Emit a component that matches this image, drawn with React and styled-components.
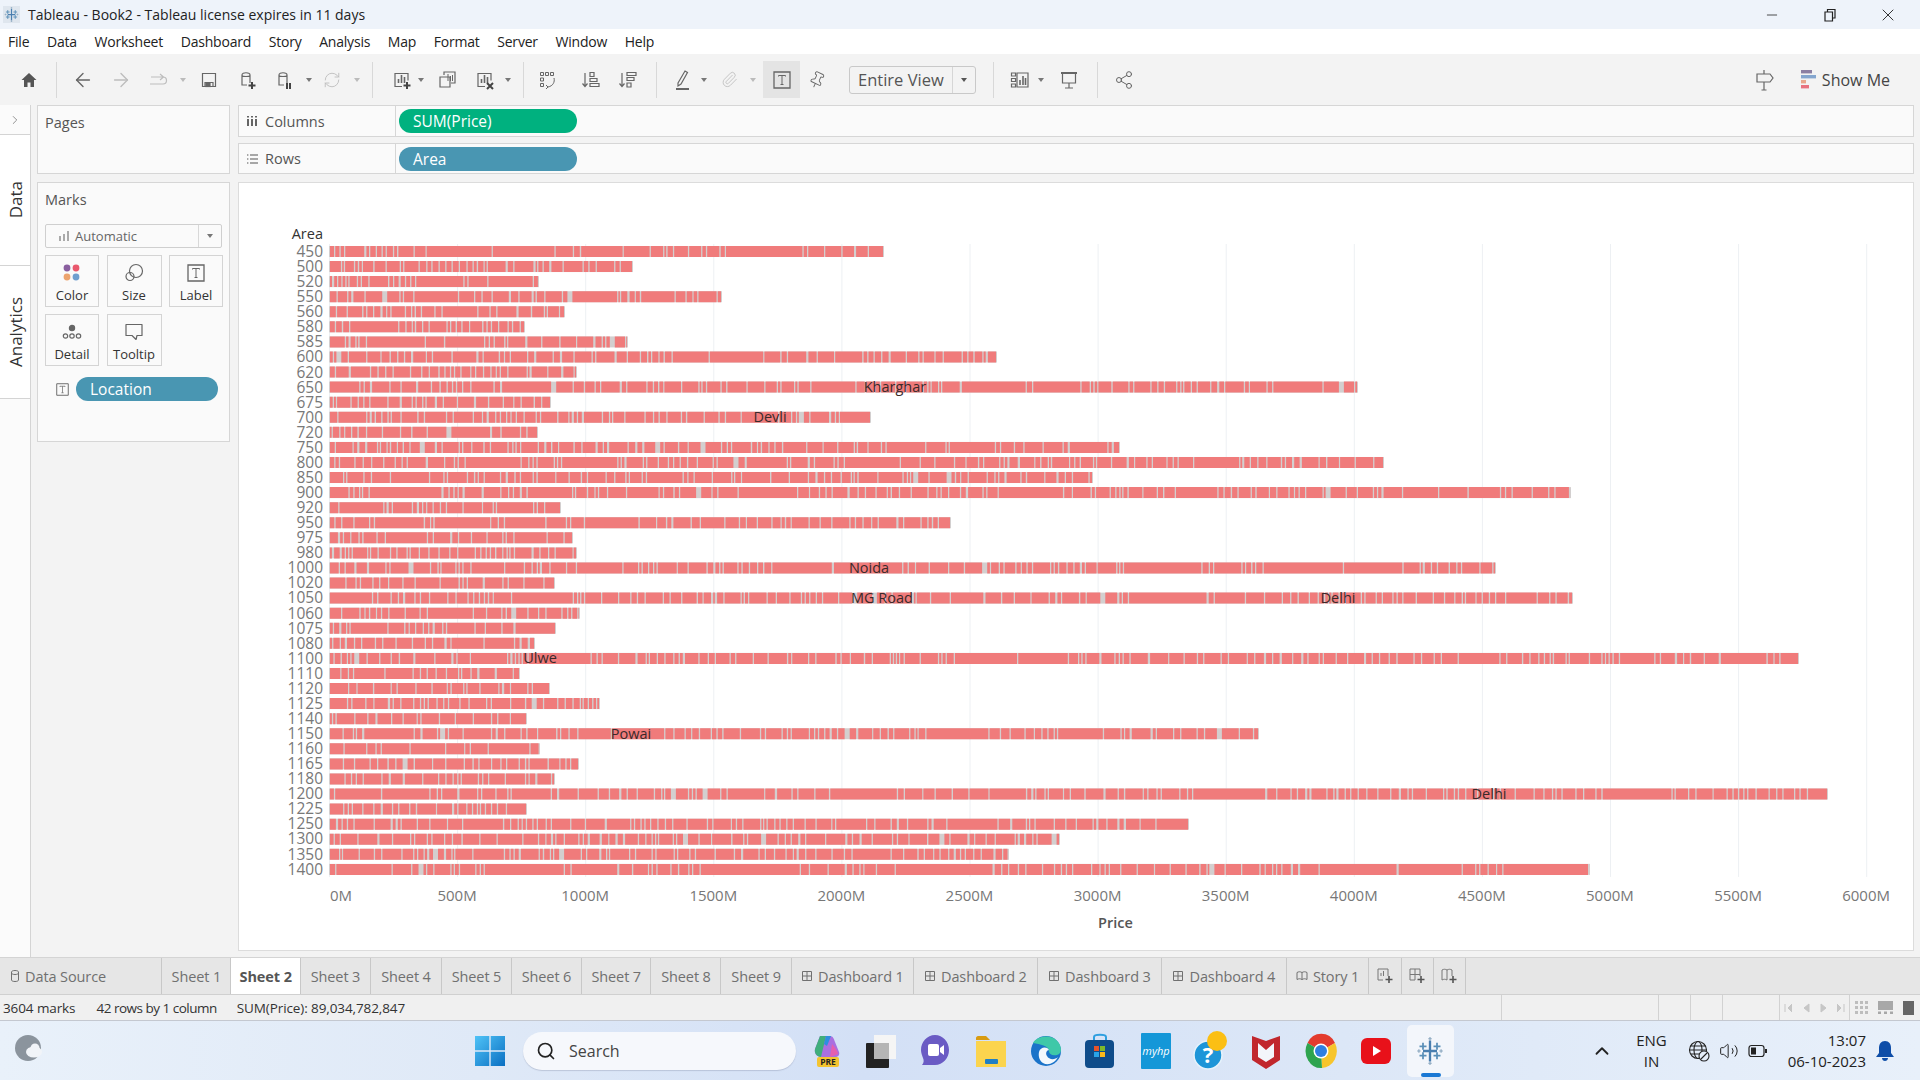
import React from 'react';
import styled, {createGlobalStyle} from 'styled-components';
import {ArrowLeft, ArrowRight, RefreshCw, Paperclip, Pin, Share2, Search, ChevronUp, ChevronRight, X, Minus, Volume2} from 'lucide-react';

const GlobalStyle = createGlobalStyle`
    html, body {
        margin: 0;
        padding: 0;
        background: #f3f3f3;
        font-family: "Open Sans", "Liberation Sans", sans-serif;
    }
`;

const Page = styled.div`
    width: 1920px;
    height: 1080px;
    overflow: hidden;
    display: flex;
    flex-direction: column;
    color: #333;
`;

const TitleBar = styled.div`
    height: 29px;
    flex: none;
    background: #eef3fa;
    display: flex;
    align-items: center;
    padding-left: 3px;
    font-size: 14px;
    color: #222;
`;
const TitleIcon = styled.div`
    width: 17px;
    height: 17px;
    background: #dfe6ee;
    display: flex;
    align-items: center;
    justify-content: center;
`;
const TitleText = styled.span`
    margin-left: 8px;
`;
const WindowButtons = styled.div`
    margin-left: auto;
    display: flex;
    align-items: center;
    color: #222;
`;
const WindowButton = styled.div`
    width: 58px;
    display: flex;
    justify-content: center;
    &:last-child { margin-right: 3px; }
`;

const MenuBar = styled.div`
    height: 25px;
    flex: none;
    background: #fff;
    display: flex;
    align-items: center;
    padding-left: 8px;
`;
const MenuItem = styled.span`
    font-size: 14px;
    color: #222;
    margin-right: 17.6px;
    letter-spacing: -0.2px;
`;

const Toolbar = styled.div`
    height: 51px;
    flex: none;
    background: #f3f3f3;
    display: flex;
    align-items: center;
`;
const ToolSlot = styled.div`
    flex: none;
    width: ${p => p.$w}px;
    margin-left: ${p => p.$ml}px;
    height: 37px;
    display: flex;
    align-items: center;
    justify-content: center;
    color: ${p => (p.$off ? '#bdbdbd' : '#666')};
    background: ${p => (p.$active ? '#e4e4e4' : 'transparent')};
`;
const ToolSep = styled.div`
    flex: none;
    width: 1px;
    height: 36px;
    margin-left: ${p => p.$ml}px;
    background: #d8d8d8;
`;
const Caret = styled.div`
    width: 0;
    height: 0;
    border-left: 3px solid transparent;
    border-right: 3px solid transparent;
    border-top: 4px solid ${p => p.$color || '#777'};
`;
const ViewCombo = styled.div`
    flex: none;
    margin-left: ${p => p.$ml}px;
    width: 127px;
    height: 28px;
    box-sizing: border-box;
    border: 1px solid #c9c9c9;
    border-radius: 3px;
    display: flex;
    align-items: center;
    font-size: 16.5px;
    color: #555;
`;
const ComboText = styled.span`
    width: 103px;
    padding-left: 8px;
    box-sizing: border-box;
    border-right: 1px solid #d6d6d6;
    line-height: 26px;
    white-space: nowrap;
`;
const ComboArrow = styled.span`
    flex: 1;
    display: flex;
    justify-content: center;
`;
const ToolRight = styled.div`
    margin-left: auto;
    display: flex;
    align-items: center;
    padding-right: 30px;
    color: #666;
`;
const ShowMe = styled.div`
    display: flex;
    align-items: center;
    gap: 6px;
    margin-left: 26px;
    font-size: 16px;
    color: #444;
`;

const Workspace = styled.div`
    flex: none;
    height: 852px;
    display: flex;
    background: #f3f3f3;
`;
const SideRail = styled.div`
    width: 30px;
    flex: none;
    background: #fbfbfb;
    border-right: 1px solid #d4d4d4;
    display: flex;
    flex-direction: column;
`;
const RailToggle = styled.div`
    height: 29px;
    border-bottom: 1px solid #d4d4d4;
    display: flex;
    align-items: center;
    justify-content: center;
    color: #666;
`;
const RailTab = styled.div`
    height: ${p => p.$h}px;
    border-bottom: 1px solid #d4d4d4;
    background: #fff;
    display: flex;
    align-items: center;
    justify-content: center;
`;
const RailText = styled.span`
    writing-mode: vertical-rl;
    transform: rotate(180deg);
    font-size: 17px;
    color: #333;
`;

const CardColumn = styled.div`
    width: 193px;
    flex: none;
    margin: 0 8px 0 6px;
    display: flex;
    flex-direction: column;
    gap: 8px;
`;
const Card = styled.div`
    box-sizing: border-box;
    height: ${p => p.$h}px;
    background: #fafafa;
    border: 1px solid #d6d6d6;
    padding: 7px 7px;
`;
const CardTitle = styled.div`
    font-size: 14.5px;
    line-height: 20px;
    color: #555;
`;
const MarkType = styled.div`
    margin-top: 14px;
    height: 24px;
    box-sizing: border-box;
    border: 1px solid #cfcfcf;
    border-radius: 2px;
    display: flex;
    align-items: center;
    font-size: 13px;
    color: #666;
`;
const MarkTypeLabel = styled.span`
    flex: 1;
    display: flex;
    align-items: center;
    gap: 6px;
    padding-left: 13px;
    border-right: 1px solid #d8d8d8;
    line-height: 22px;
`;
const MarkTypeArrow = styled.span`
    width: 22px;
    display: flex;
    justify-content: center;
`;
const MarkGrid = styled.div`
    margin-top: 7px;
    display: grid;
    grid-template-columns: 54px 55px 54px;
    grid-auto-rows: 52px;
    column-gap: 7.5px;
    row-gap: 7px;
`;
const MarkButton = styled.div`
    box-sizing: border-box;
    border: 1px solid #d4d4d4;
    display: flex;
    flex-direction: column;
    align-items: center;
    padding-top: 3px;
    font-size: 13px;
    color: #333;
`;
const MarkIcon = styled.div`
    height: 27px;
    display: flex;
    align-items: center;
    justify-content: center;
    color: #666;
`;
const LocationRow = styled.div`
    margin: 11px 0 0 11px;
    display: flex;
    align-items: center;
    gap: 7px;
    color: #666;
`;

const ViewColumn = styled.div`
    flex: 1;
    margin-right: 6px;
    display: flex;
    flex-direction: column;
    min-width: 0;
`;
const Shelf = styled.div`
    height: ${p => p.$h}px;
    flex: none;
    box-sizing: border-box;
    margin-bottom: ${p => p.$mb}px;
    background: #fafafa;
    border: 1px solid #d6d6d6;
    display: flex;
    align-items: center;
`;
const ShelfLabel = styled.div`
    width: 157px;
    height: 100%;
    flex: none;
    box-sizing: border-box;
    border-right: 1px solid #d6d6d6;
    display: flex;
    align-items: center;
    gap: 7px;
    padding-left: 7px;
    font-size: 14.5px;
    color: #555;
`;
const Pill = styled.div`
    box-sizing: border-box;
    width: ${p => p.$w}px;
    height: 24px;
    margin-left: ${p => p.$ml || 0}px;
    border-radius: 12px;
    background: ${p => (p.$green ? '#00b17f' : '#4996b2')};
    color: #fff;
    font-size: 15.5px;
    font-weight: 500;
    line-height: 24px;
    padding-left: 14px;
`;

const ChartPanel = styled.div`
    height: 769px;
    box-sizing: border-box;
    flex: none;
    background: #fff;
    border: 1px solid #dcdcdc;
    padding-top: 41px;
`;
const ChartGrid = styled.div`
    display: grid;
    grid-template-columns: 84px 1573px;
    column-gap: 6px;
`;
const AreaTitle = styled.div`
    height: 20px;
    line-height: 20px;
    text-align: right;
    font-size: 14.5px;
    color: #333;
`;
const YAxis = styled.div`
    grid-column: 1;
    display: flex;
    flex-direction: column;
`;
const YLabel = styled.div`
    height: ${p => p.$h}px;
    line-height: ${p => p.$h}px;
    text-align: right;
    font-size: 15.5px;
    color: #787878;
`;
const Plot = styled.div`
    position: relative;
    height: ${p => p.$h}px;
`;
const BarSvg = styled.svg`
    display: block;
`;
const MarkLabel = styled.span`
    position: absolute;
    transform: translate(-50%, -50%);
    font-size: 14.5px;
    line-height: 16px;
    color: #3a2a2a;
    white-space: nowrap;
`;
const TickRow = styled.div`
    grid-column: 2;
    display: flex;
    height: 36px;
    align-items: center;
    font-size: 15px;
    color: #777;
`;
const Tick = styled.span`
    flex: none;
    width: ${p => (p.$first ? 64.05 : 128.1)}px;
    text-align: ${p => (p.$first ? 'left' : 'center')};
    padding-left: ${p => (p.$first ? 1 : 0)}px;
    box-sizing: border-box;
`;
const PriceTitle = styled.div`
    grid-column: 2;
    text-align: center;
    font-size: 14.5px;
    font-weight: 600;
    color: #555;
`;

const TabBar = styled.div`
    height: 38px;
    flex: none;
    box-sizing: border-box;
    background: #e6e6e6;
    border-top: 1px solid #d4d4d4;
    border-bottom: 1px solid #d0d0d0;
    display: flex;
`;
const Tab = styled.div`
    flex: none;
    width: ${p => p.$w}px;
    box-sizing: border-box;
    border-right: 1px solid #c8c8c8;
    display: flex;
    align-items: center;
    justify-content: ${p => (p.$left ? 'flex-start' : 'center')};
    padding-left: ${p => (p.$left ? 10 : 0)}px;
    gap: 5px;
    font-size: 14.5px;
    font-weight: ${p => (p.$active ? 700 : 400)};
    letter-spacing: -0.1px;
    color: ${p => (p.$active ? '#555' : '#707070')};
    background: ${p => (p.$active ? '#fff' : 'transparent')};
`;

const StatusBar = styled.div`
    height: 26px;
    flex: none;
    box-sizing: border-box;
    background: #f0f0f0;
    border-bottom: 1px solid #c4c8d0;
    display: flex;
    font-size: 13.5px;
    color: #333;
`;
const StatusCell = styled.div`
    flex: none;
    width: ${p => p.$w}px;
    box-sizing: border-box;
    border-right: 1px solid ${p => (p.$plain ? 'transparent' : '#d2d2d2')};
    display: flex;
    align-items: center;
    justify-content: ${p => (p.$spread ? 'space-around' : 'flex-start')};
`;
const StatusText = styled.span`
    margin-left: ${p => p.$ml}px;
    letter-spacing: ${p => p.$track || -0.1}px;
`;

const Taskbar = styled.div`
    height: 59px;
    flex: none;
    background: linear-gradient(90deg, #e9f1fa 0%, #dfe9f7 25%, #d3e0f6 45%, #dce7f7 70%, #e8f0fa 100%);
    display: flex;
    align-items: center;
    padding-left: 14px;
`;
const WeatherSlot = styled.div`
    width: 30px;
    flex: none;
`;
const StartSlot = styled.div`
    margin-left: 431px;
    flex: none;
    display: flex;
`;
const SearchBox = styled.div`
    margin-left: 18px;
    width: 273px;
    height: 38px;
    flex: none;
    box-sizing: border-box;
    background: #f6f8fc;
    border-radius: 19px;
    box-shadow: 0 1px 1px rgba(90, 100, 130, 0.25);
    display: flex;
    align-items: center;
    gap: 13px;
    padding-left: 13px;
    font-size: 16px;
    color: #444;
`;
const AppIcons = styled.div`
    margin-left: 8.5px;
    display: flex;
    align-items: center;
`;
const AppIcon = styled.div`
    width: ${p => p.$w || 45}px;
    height: 52px;
    flex: none;
    display: flex;
    align-items: center;
    justify-content: center;
`;
const ActiveApp = styled.div`
    position: relative;
    width: 47px;
    height: 52px;
    margin-left: 7px;
    flex: none;
    background: #f3f6fb;
    border-radius: 5px;
    display: flex;
    align-items: center;
    justify-content: center;
`;
const ActiveDash = styled.span`
    position: absolute;
    left: 14px;
    bottom: 0;
    width: 20px;
    height: 4px;
    border-radius: 2px;
    background: #1a78d4;
`;
const Tray = styled.div`
    margin-left: auto;
    display: flex;
    align-items: center;
    color: #222;
    padding-right: 26px;
`;
const TrayText = styled.div`
    margin-left: 23px;
    text-align: center;
    font-size: 15px;
    line-height: 21px;
`;
const TrayIcons = styled.div`
    margin-left: 21px;
    display: flex;
    align-items: center;
    gap: 9px;
`;
const Clock = styled.div`
    margin-left: 20px;
    text-align: right;
    font-size: 15px;
    line-height: 21px;
`;
const BellSlot = styled.div`
    margin-left: 10px;
    display: flex;
`;

const Ico = ({s = 20, w, h, children, fill = 'none', sw = 1.2}) => (
    <svg width={w || s} height={h || s} viewBox={`0 0 ${w || s} ${h || s}`} fill={fill} stroke="currentColor" strokeWidth={sw}>
        {children}
    </svg>
);

const TableauLogo = ({s = 22}) => (
    <svg width={s} height={s} viewBox="0 0 24 24" strokeWidth="1.5" fill="none">
        <path d="M12 3v18M6 12h12" stroke="#4a7fb0" strokeWidth="2" />
        <path d="M6 5v6M3 8h6M18 5v6M15 8h6M6 13v6M3 16h6M18 13v6M15 16h6" stroke="#5a8fb8" />
        <path d="M12 0v3M10.5 1.5h3M12 21v3M10.5 22.5h3M1 12h3M2.5 10.5v3M20 12h3M21.5 10.5v3" stroke="#8aa7bf" strokeWidth="1" />
    </svg>
);

const HomeIcon = () => <svg width="18" height="18" viewBox="0 0 18 18" fill="#555"><path d="M9 2 1.5 9H4v7h3.5v-4.5h3V16H14V9h2.5z" /></svg>;
const RedoIcon = () => <Ico w={22} h={20}><path d="M2 14h13a3.5 3.5 0 0 0 0-7H3M12 4l3.5 3-3.5 3" /></Ico>;
const SaveIcon = () => <Ico><path d="M3.5 3.5h13v13h-13zM6 16.5v-4h8v4" /><rect x="7" y="13.5" width="4" height="3" fill="currentColor" /></Ico>;
const Cylinder = ({children}) => (
    <Ico>
        <path d="M4 5c0-3 8-3 8 0v8M4 5v10h5M4 5c0 2 8 2 8 0" />
        {children}
    </Ico>
);
const AddSourceIcon = () => <Cylinder><path d="M14 12v7M10.5 15.5h7" stroke="#444" strokeWidth="2" /></Cylinder>;
const PauseSourceIcon = () => <Cylinder><path d="M12 13v6M15 13v6" stroke="#444" strokeWidth="2" /></Cylinder>;
const SheetBars = () => <path d="M6.5 13V9M9.5 13V5M12.5 13V7" strokeWidth="1.6" />;
const NewSheetIcon = () => <Ico><path d="M10 16.5H3v-13h13v7" /><SheetBars /><path d="M15 12v7M11.5 15.5h7" stroke="#444" strokeWidth="2" /></Ico>;
const DupSheetIcon = () => <Ico><path d="M7 5V2h11v11h-4" /><path d="M3 7h10v10H3z" /><path d="M11 4v7M13.5 6v5M15.5 5v6" strokeWidth="1" /></Ico>;
const ClearSheetIcon = () => <Ico><path d="M10 16.5H3v-13h13v7" /><SheetBars /><path d="m12 13 6 6M18 13l-6 6" stroke="#444" strokeWidth="2" /></Ico>;
const SwapIcon = () => (
    <Ico sw={1}>
        <path d="M2.5 2.5h3v3h-3zM7.5 2.5h3v3h-3zM12.5 2.5h3v3h-3zM2.5 8h3v3h-3zM2.5 13.5h3v3h-3z" />
        <path d="M16 8c1 4-1 8-6 9M8 15l2 2-2 2" />
    </Ico>
);
const SortAscIcon = () => <Ico><path d="M5 3v13M2.5 13.5 5 16.5l2.5-3" /><path d="M10 2.5h4v4h-4zM10 8.5h7v3h-7zM10 13.5h9v3h-9z" /></Ico>;
const SortDescIcon = () => <Ico><path d="M5 3v13M2.5 13.5 5 16.5l2.5-3" /><path d="M10 2.5h9v3h-9zM10 7.5h7v3h-7zM10 13h4v4h-4z" /></Ico>;
const HighlightIcon = () => (
    <svg width="18" height="24" viewBox="0 0 18 24" fill="none" stroke="currentColor" strokeWidth="1.2">
        <path d="m4 15 7-12 2.5 1.5L7 16l-3 2z" />
        <path d="M2 21h13" strokeWidth="2" />
    </svg>
);
const TextBoxIcon = ({s = 18}) => (
    <svg width={s} height={s} viewBox="0 0 18 18" fill="none" stroke="currentColor" strokeWidth="1.3">
        <path d="M1 1h16v16H1z" />
        <path d="M5.5 5.5v-1h7v1M9 4.5v9M7.5 13.5h3" strokeWidth="1" />
    </svg>
);
const ShowMeChartIcon = () => <Ico><path d="M1.5 3h4v3h-4zM1.5 8.5h4v3h-4zM1.5 14h4v3h-4zM7 3h11v14H7z" /><path d="M10 15v-5M13 15V6M15.5 15v-7" strokeWidth="1.6" /></Ico>;
const PresentIcon = () => <Ico><path d="M2 3h16" strokeWidth="2" /><path d="M3.5 3v10h13V3M10 13v5M6 18h8" /></Ico>;
const SignpostIcon = () => <Ico w={20} h={22}><path d="M2 5h13l3 4-3 4H2zM9 1v4M9 13v8M6.5 21h5" /></Ico>;
const ShowMeBars = () => (
    <svg width="15" height="20" viewBox="0 0 15 20">
        <rect width="11" height="3.4" fill="#8b7fa3" />
        <rect y="5" width="15" height="3.4" fill="#84a6cf" />
        <rect y="10" width="5" height="3.4" fill="#e9a78c" />
        <rect y="15" width="8" height="3.4" fill="#e8727f" />
    </svg>
);
const ColumnsGlyph = () => <Ico s={12} sw={1.8}><path d="M2 4v7M6 4v7M10 4v7" /><path d="M2 1v1.4M6 1v1.4M10 1v1.4" /></Ico>;
const RowsGlyph = () => <Ico s={12} sw={1.2}><path d="M1 2h1.4M4 2h8M1 6h1.4M4 6h8M1 10h1.4M4 10h8" /></Ico>;
const DotsIcon = () => (
    <svg width="18" height="18" viewBox="0 0 18 18">
        <circle cx="4" cy="4" r="3.4" fill="#8a5f9f" /><circle cx="13" cy="4" r="3.4" fill="#e9586d" />
        <circle cx="4" cy="13" r="3.4" fill="#eca36d" /><circle cx="13" cy="13" r="3.4" fill="#6f9fcf" />
    </svg>
);
const SizeIcon = () => <Ico><circle cx="12" cy="8" r="6.5" /><circle cx="6" cy="13.5" r="4" /></Ico>;
const DetailIcon = () => (
    <Ico w={22} h={18}>
        <circle cx="11" cy="5" r="2.6" fill="currentColor" />
        <circle cx="4.5" cy="13" r="2.2" /><circle cx="11" cy="13" r="2.2" /><circle cx="17.5" cy="13" r="2.2" />
    </Ico>
);
const TooltipIcon = () => <Ico><path d="M2 2.5h16v11h-5l-1 4-4-4H2z" strokeLinejoin="round" /></Ico>;
const SourceGlyph = () => <Ico w={10} h={14} sw={1}><path d="M1.5 3c0-2 7-2 7 0v8c0 2-7 2-7 0zM1.5 4c0 2 7 2 7 0" /></Ico>;
const DashGlyph = () => <Ico s={12} sw={1}><path d="M1.5 1.5h9v9h-9zM6 1.5v9M1.5 6h9" /></Ico>;
const StoryGlyph = () => <Ico s={12} sw={1}><path d="M1 2.5c2-1 3-1 5 0 2-1 3-1 5 0v7c-2-1-3-1-5 0-2-1-3-1-5 0zM6 2.5v7" /></Ico>;
const AddTabIcon = ({children}) => (
    <svg width="18" height="18" viewBox="0 0 18 18" fill="none" stroke="#777" strokeWidth="1">
        {children}
        <path d="M13 9v7M9.5 12.5h7" strokeWidth="1.6" stroke="#555" />
    </svg>
);

const WeatherIcon = () => (
    <svg width="30" height="30" viewBox="0 0 30 30">
        <circle cx="14" cy="15" r="13" fill="#8b949d" />
        <ellipse cx="20" cy="19" rx="8" ry="5.5" fill="#f1f4f8" />
        <circle cx="21" cy="15" r="4.5" fill="#f1f4f8" />
    </svg>
);
const WinLogo = () => (
    <svg width="30" height="30" viewBox="0 0 30 30">
        <defs><linearGradient id="wl" x1="0" y1="0" x2="1" y2="1"><stop offset="0" stopColor="#4fc3f7" /><stop offset="1" stopColor="#0a6fc2" /></linearGradient></defs>
        <path d="M0 0h14.3v14.3H0zM15.7 0H30v14.3H15.7zM0 15.7h14.3V30H0zM15.7 15.7H30V30H15.7z" fill="url(#wl)" />
    </svg>
);
const CopilotIcon = () => (
    <svg width="30" height="34" viewBox="0 0 30 34">
        <path d="M8 2h10c3 0 4 3 5 6l4 10c1 3-1 5-4 5H10C5 23 2 20 3 15z" fill="#a96fe0" />
        <path d="M3 15 8 2h6L9 23c-4 0-7-4-6-8z" fill="#3fae7c" />
        <path d="M14 2h5l-4 10-3-2z" fill="#2d8fe0" />
        <path d="M20 10c3 3 6 8 6 10l-8 3z" fill="#e45fb0" />
        <rect x="5" y="23" width="22" height="10" rx="2" fill="#f4c430" />
        <text x="16" y="31" fontSize="8.5" fontWeight="700" textAnchor="middle" fontFamily="Open Sans" fill="#222">PRE</text>
    </svg>
);
const TaskViewIcon = () => (
    <svg width="30" height="34" viewBox="0 0 30 34">
        <rect x="8" y="1" width="22" height="24" fill="#f5f5f5" />
        <rect y="9" width="23" height="25" rx="1" fill="#222" />
        <rect x="8" y="9" width="15" height="16" fill="#b5b5b5" />
    </svg>
);
const ChatIcon = () => (
    <svg width="30" height="34" viewBox="0 0 30 34">
        <path d="M15 1c8 0 14 7 14 15s-6 15-14 15H2c2-2 2-5 1-7-1-3-2-5-2-8C1 8 7 1 15 1z" fill="#6a5bc4" />
        <rect x="8" y="10" width="11" height="12" rx="2" fill="#fff" />
        <path d="m20 14 4-3v10l-4-3z" fill="#fff" />
    </svg>
);
const FolderIcon = () => (
    <svg width="30" height="32" viewBox="0 0 30 32">
        <path d="M0 3c0-1 1-2 2-2h8l4 4h-14z" fill="#d89b12" />
        <path d="M0 6h30v26H0z" fill="#fbd44e" />
        <rect x="9" y="24" width="13" height="5" rx="1" fill="#1f7fc4" />
    </svg>
);
const EdgeIcon = () => (
    <svg width="30" height="32" viewBox="0 0 30 32">
        <circle cx="15" cy="16" r="15" fill="#1a73c9" />
        <path d="M2 8C6 0 24-2 29 10c2 5 1 9-3 10-5 1-8-1-8-4 0-5-9-7-16-8z" fill="#3fc8a8" />
        <path d="M8 17c1-5 8-6 10-2-2 0-4 3-2 6 2 4 8 4 11 1-3 6-10 9-15 6-3-2-5-6-4-11z" fill="#f2f8fd" />
    </svg>
);
const StoreIcon = () => (
    <svg width="30" height="36" viewBox="0 0 30 36">
        <path d="M9 8V4c0-3 12-3 12 0v4" fill="none" stroke="#2f9fe0" strokeWidth="2" />
        <rect y="7" width="29" height="28" rx="4" fill="#0f4c8a" />
        <rect x="9" y="13" width="5" height="5" fill="#e8532b" /><rect x="15" y="13" width="5" height="5" fill="#7fba2a" />
        <rect x="9" y="19" width="5" height="5" fill="#2aa3e8" /><rect x="15" y="19" width="5" height="5" fill="#fbb91a" />
    </svg>
);
const HpIcon = () => (
    <svg width="30" height="36" viewBox="0 0 30 36">
        <rect width="30" height="36" rx="1" fill="#1497d8" />
        <text x="15" y="22" fontSize="11" fontStyle="italic" textAnchor="middle" fontFamily="Open Sans" fill="#fff">myhp</text>
    </svg>
);
const HelpIcon = () => (
    <svg width="36" height="44" viewBox="0 0 36 44">
        <circle cx="15" cy="26" r="14" fill="#1d95d8" stroke="#e5f2fb" strokeWidth="1.5" />
        <text x="15" y="34" fontSize="22" fontWeight="700" textAnchor="middle" fontFamily="Open Sans" fill="#fff">?</text>
        <circle cx="24" cy="12" r="10" fill="#fbbf14" />
    </svg>
);
const McAfeeIcon = () => <svg width="28" height="36" viewBox="0 0 28 36"><path d="M0 3 14 8l14-5v24l-14 9-14-9z" fill="#c1272d" /><path d="M6 10v14l8 5 8-5V10l-8 7z" fill="#f3f5fa" /></svg>;
const ChromeIcon = () => (
    <svg width="32" height="36" viewBox="0 0 32 36">
        <path d="M16 18 2.5 10A15.5 17 0 0 1 30 10z" fill="#e33b2e" />
        <path d="M16 18 30 10a15.5 17 0 0 1-13 25z" fill="#f7c52c" />
        <path d="M16 18 17 35A15.5 17 0 0 1 2.5 10z" fill="#2ea44f" />
        <circle cx="16" cy="18" r="7.5" fill="#fff" /><circle cx="16" cy="18" r="6" fill="#2f7fe0" />
    </svg>
);
const YoutubeIcon = () => <svg width="30" height="26" viewBox="0 0 30 26"><rect width="30" height="26" rx="6" fill="#e8111a" /><path d="m12 8 8 5-8 5z" fill="#fff" /></svg>;
const GlobeOffIcon = () => (
    <Ico s={22} sw={1.1}>
        <circle cx="10" cy="10" r="8.5" />
        <ellipse cx="10" cy="10" rx="4" ry="8.5" />
        <path d="M1.5 10h17M2.5 6h15M2.5 14h9" />
        <circle cx="16" cy="16" r="5" fill="#e4edf9" />
        <path d="m13 19 6-6" />
    </Ico>
);
const BatteryIcon = () => (
    <svg width="20" height="14" viewBox="0 0 20 14" fill="none" stroke="#222" strokeWidth="1.2">
        <rect x="1" y="1.5" width="15" height="11" rx="2.5" />
        <rect x="3" y="3.5" width="5" height="7" fill="#222" stroke="none" />
        <path d="M18 5v4" strokeWidth="2" />
    </svg>
);
const BellIcon = () => <svg width="18" height="22" viewBox="0 0 18 22" fill="#0f4ea8"><path d="M9 1c4 0 6 3 6 7v5l3 4H0l3-4V8c0-4 2-7 6-7zM6 18h6c0 4-6 4-6 0z" /></svg>;

const toolItems = [
    {c: 28.5, w: 24, el: <HomeIcon />},
    {c: 56.5, sep: true},
    {c: 83, w: 24, el: <ArrowLeft size={22} strokeWidth={1.5} />},
    {c: 121, w: 24, off: true, el: <ArrowRight size={22} strokeWidth={1.5} />},
    {c: 159, w: 24, off: true, el: <RedoIcon />},
    {c: 183, w: 8, caret: '#bbb'},
    {c: 208.5, w: 22, el: <SaveIcon />},
    {c: 248, w: 22, el: <AddSourceIcon />},
    {c: 285, w: 22, el: <PauseSourceIcon />},
    {c: 309, w: 8, caret: '#777'},
    {c: 332, w: 22, off: true, el: <RefreshCw size={18} strokeWidth={1.2} />},
    {c: 357, w: 8, caret: '#bbb'},
    {c: 372, sep: true},
    {c: 402, w: 22, el: <NewSheetIcon />},
    {c: 421, w: 8, caret: '#777'},
    {c: 447, w: 22, el: <DupSheetIcon />},
    {c: 485, w: 22, el: <ClearSheetIcon />},
    {c: 508, w: 8, caret: '#777'},
    {c: 523, sep: true},
    {c: 548, w: 22, el: <SwapIcon />},
    {c: 590, w: 22, el: <SortAscIcon />},
    {c: 627, w: 22, el: <SortDescIcon />},
    {c: 656, sep: true},
    {c: 683, w: 22, el: <HighlightIcon />},
    {c: 704, w: 8, caret: '#777'},
    {c: 729, w: 22, off: true, el: <Paperclip size={17} strokeWidth={1.2} />},
    {c: 753, w: 8, caret: '#bbb'},
    {c: 781.5, w: 37, active: true, el: <TextBoxIcon />},
    {c: 817, w: 22, el: <Pin size={18} strokeWidth={1.2} style={{transform: 'rotate(25deg)'}} />},
    {combo: true, c: 912.5, w: 127},
    {c: 993.5, sep: true},
    {c: 1020, w: 22, el: <ShowMeChartIcon />},
    {c: 1041, w: 8, caret: '#777'},
    {c: 1068.5, w: 22, el: <PresentIcon />},
    {c: 1097.5, sep: true},
    {c: 1124, w: 22, el: <Share2 size={20} strokeWidth={1.2} />},
];

const menuItems = ['File', 'Data', 'Worksheet', 'Dashboard', 'Story', 'Analysis', 'Map', 'Format', 'Server', 'Window', 'Help'];

// [area, bar length in px, how busy the stripes are]
const rows = [
    [450, 555, 0.8], [500, 304, 1.3], [520, 210, 0.7], [550, 393, 1.2], [560, 236, 1.3], [580, 196, 1.2],
    [585, 299, 1], [600, 668, 1.2], [620, 248, 1], [650, 1029, 1], [675, 222, 1.1], [700, 542, 1.3],
    [720, 209, 1.3], [750, 791, 1.1], [800, 1055, 1.1], [850, 764, 1.2], [900, 1242, 0.9], [920, 232, 1.3],
    [950, 622, 1.1], [975, 244, 1.2], [980, 248, 1.2], [1000, 1167, 0.8], [1020, 226, 1.4], [1050, 1244, 0.8],
    [1060, 251, 1.3], [1075, 227, 1.2], [1080, 206, 1.5], [1100, 1470, 0.8], [1110, 191, 1.4], [1120, 221, 1.3],
    [1125, 271, 1.2], [1140, 198, 1.2], [1150, 930, 1], [1160, 211, 1.3], [1165, 250, 1.1], [1180, 226, 1.3],
    [1200, 1499, 0.8], [1225, 198, 1.2], [1250, 860, 1.3], [1300, 731, 1.5], [1350, 680, 1.5], [1400, 1261, 0.6],
];

const ROW_H = 15.07;
const BAR_H = 11;
const PLOT_W = 1573;
const PX_PER_TICK = 128.1;

const seeded = seed => () => {
    seed = (seed + 0x6d2b79f5) | 0;
    let t = Math.imul(seed ^ (seed >>> 15), 1 | seed);
    t = (t + Math.imul(t ^ (t >>> 7), 61 | t)) ^ t;
    return ((t ^ (t >>> 14)) >>> 0) / 4294967296;
};

const barPath = (area, end, busy, y) => {
    const rnd = seeded(area * 7919);
    let x = 1;
    let d = '';
    while (x < end - 1) {
        const r = rnd();
        let seg;
        if (r < 0.5) seg = 1.5 + rnd() * 5;
        else if (r < 0.93) seg = 6 + rnd() * 13;
        else seg = (20 + rnd() * 45) / busy;
        seg = Math.min(seg, end - 1 - x);
        d += `M${x.toFixed(1)} ${y}h${seg.toFixed(1)}v${BAR_H}h${(-seg).toFixed(1)}z`;
        const g = rnd();
        x += seg + (g < 0.88 ? 1.3 : g < 0.98 ? 2.2 : 5);
    }
    return d;
};

const markLabels = [
    ['Kharghar', 895, 9], ['Devli', 770, 11], ['Noida', 869, 21], ['MG Road', 882, 23], ['Delhi', 1338, 23],
    ['Ulwe', 540, 27], ['Powai', 631, 32], ['Delhi', 1489, 36],
];
const ticks = Array.from({length: 13}, (_, i) => `${i * 500}M`);

const tabs = [
    ['Sheet 1', 69], ['Sheet 2', 69.6, true], ['Sheet 3', 70], ['Sheet 4', 71], ['Sheet 5', 70], ['Sheet 6', 70],
    ['Sheet 7', 69.5], ['Sheet 8', 70], ['Sheet 9', 70.4],
];
const dashTabs = [['Dashboard 1', 122], ['Dashboard 2', 124], ['Dashboard 3', 124], ['Dashboard 4', 125]];

const Tools = () => {
    let right = 0;
    return toolItems.map((t, i) => {
        const w = t.sep ? 1 : t.w;
        const ml = t.c - w / 2 - right;
        right = t.c + w / 2;
        if (t.sep) return <ToolSep key={i} $ml={ml} />;
        if (t.combo) {
            return (
                <ViewCombo key={i} $ml={ml}>
                    <ComboText>Entire View</ComboText>
                    <ComboArrow><Caret $color="#555" /></ComboArrow>
                </ViewCombo>
            );
        }
        return (
            <ToolSlot key={i} $w={w} $ml={ml} $off={t.off} $active={t.active}>
                {t.caret ? <Caret $color={t.caret} /> : t.el}
            </ToolSlot>
        );
    });
};

const Chart = () => (
    <ChartPanel>
        <ChartGrid>
            <AreaTitle>Area</AreaTitle>
            <div />
            <YAxis>
                {rows.map(([area]) => <YLabel key={area} $h={ROW_H}>{area}</YLabel>)}
            </YAxis>
            <Plot $h={ROW_H * rows.length}>
                <BarSvg width={PLOT_W} height={ROW_H * rows.length}>
                    {ticks.map((t, i) => (
                        <line key={t} x1={i * PX_PER_TICK + 0.5} x2={i * PX_PER_TICK + 0.5} y1="0" y2={ROW_H * rows.length} stroke="#edf0f3" />
                    ))}
                    {rows.map(([area, len], i) => (
                        <rect key={area} y={i * ROW_H + 2} width={len} height={BAR_H} fill="#d3cfcf" />
                    ))}
                    {rows.map(([area, len, busy], i) => (
                        <path key={area} d={barPath(area, len, busy, +(i * ROW_H + 2).toFixed(1))} fill="#f07b7b" />
                    ))}
                </BarSvg>
                {markLabels.map(([text, x, row]) => (
                    <MarkLabel key={text + x} style={{left: x - 329, top: (row + 0.5) * ROW_H}}>{text}</MarkLabel>
                ))}
            </Plot>
            <TickRow>
                {ticks.map((t, i) => <Tick key={t} $first={i === 0}>{t}</Tick>)}
            </TickRow>
            <PriceTitle>Price</PriceTitle>
        </ChartGrid>
    </ChartPanel>
);

export default function App() {
    return (
        <Page>
            <GlobalStyle />
            <TitleBar>
                <TitleIcon><TableauLogo s={15} /></TitleIcon>
                <TitleText>Tableau - Book2 - Tableau license expires in 11 days</TitleText>
                <WindowButtons>
                    <WindowButton><Minus size={16} strokeWidth={1.2} /></WindowButton>
                    <WindowButton>
                        <svg width="14" height="14" viewBox="0 0 14 14" fill="none" stroke="#222" strokeWidth="1.2"><path d="M2 4h7.5v9H2zM4.5 4V1.5H12V10H9.5" /></svg>
                    </WindowButton>
                    <WindowButton><X size={20} strokeWidth={1.1} /></WindowButton>
                </WindowButtons>
            </TitleBar>
            <MenuBar>
                {menuItems.map(m => <MenuItem key={m}>{m}</MenuItem>)}
            </MenuBar>
            <Toolbar>
                <Tools />
                <ToolRight>
                    <SignpostIcon />
                    <ShowMe><ShowMeBars />Show Me</ShowMe>
                </ToolRight>
            </Toolbar>
            <Workspace>
                <SideRail>
                    <RailToggle><ChevronRight size={14} strokeWidth={1.2} /></RailToggle>
                    <RailTab $h={130}><RailText>Data</RailText></RailTab>
                    <RailTab $h={132}><RailText>Analytics</RailText></RailTab>
                </SideRail>
                <CardColumn>
                    <Card $h={69}>
                        <CardTitle>Pages</CardTitle>
                    </Card>
                    <Card $h={260}>
                        <CardTitle>Marks</CardTitle>
                        <MarkType>
                            <MarkTypeLabel>
                                <svg width="10" height="10" viewBox="0 0 10 10" fill="#aaa"><path d="M0 5h2v5H0zM4 3h2v7H4zM8 0h2v10H8z" /></svg>
                                Automatic
                            </MarkTypeLabel>
                            <MarkTypeArrow><Caret /></MarkTypeArrow>
                        </MarkType>
                        <MarkGrid>
                            <MarkButton><MarkIcon><DotsIcon /></MarkIcon>Color</MarkButton>
                            <MarkButton><MarkIcon><SizeIcon /></MarkIcon>Size</MarkButton>
                            <MarkButton><MarkIcon><TextBoxIcon /></MarkIcon>Label</MarkButton>
                            <MarkButton><MarkIcon><DetailIcon /></MarkIcon>Detail</MarkButton>
                            <MarkButton><MarkIcon><TooltipIcon /></MarkIcon>Tooltip</MarkButton>
                        </MarkGrid>
                        <LocationRow>
                            <TextBoxIcon s={13} />
                            <Pill $w={142}>Location</Pill>
                        </LocationRow>
                    </Card>
                </CardColumn>
                <ViewColumn>
                    <Shelf $h={32} $mb={6}>
                        <ShelfLabel><ColumnsGlyph />Columns</ShelfLabel>
                        <Pill $w={178} $ml={3} $green>SUM(Price)</Pill>
                    </Shelf>
                    <Shelf $h={31} $mb={8}>
                        <ShelfLabel><RowsGlyph />Rows</ShelfLabel>
                        <Pill $w={178} $ml={3}>Area</Pill>
                    </Shelf>
                    <Chart />
                </ViewColumn>
            </Workspace>
            <TabBar>
                <Tab $w={162.4} $left><SourceGlyph />Data Source</Tab>
                {tabs.map(([t, w, active]) => <Tab key={t} $w={w} $active={active}>{t}</Tab>)}
                {dashTabs.map(([t, w]) => <Tab key={t} $w={w}><DashGlyph />{t}</Tab>)}
                <Tab $w={82.5}><StoryGlyph />Story 1</Tab>
                <Tab $w={32.5}><AddTabIcon><path d="M2 2h10v7M7 13H2V2M5 9V6M7.5 9V4" /></AddTabIcon></Tab>
                <Tab $w={32}><AddTabIcon><path d="M2 2h10v7M7 13H2V2M7 2v11M2 7.5h10" /></AddTabIcon></Tab>
                <Tab $w={32}><AddTabIcon><path d="M2 3c2-1 3-1 5 0 2-1 3-1 5 0v6M7 13c-2-1-3-1-5 0V3M7 3v10" /></AddTabIcon></Tab>
            </TabBar>
            <StatusBar>
                <StatusCell $w={1501.6}>
                    <StatusText $ml={3}>3604 marks</StatusText>
                    <StatusText $ml={21} $track={-0.5}>42 rows by 1 column</StatusText>
                    <StatusText $ml={20}>SUM(Price): 89,034,782,847</StatusText>
                </StatusCell>
                <StatusCell $w={157.2} />
                <StatusCell $w={32} />
                <StatusCell $w={32} />
                <StatusCell $w={57} />
                <StatusCell $w={70.4} $spread>
                    {['M2 2v8M9 2 5 6l4 4', 'M8 2 3 6l5 4z', 'M3 2l5 4-5 4z', 'M9 2v8M2 2l4 4-4 4'].map(d => (
                        <svg key={d} width="10" height="12" viewBox="0 0 10 12" fill="#c6c6c6" stroke="#c6c6c6" strokeWidth="1"><path d={d} /></svg>
                    ))}
                </StatusCell>
                <StatusCell $w={70} $plain $spread>
                    <svg width="13" height="13" viewBox="0 0 13 13" fill="#bdbdbd"><path d="M0 0h3v3H0zM5 0h3v3H5zM10 0h3v3h-3zM0 5h3v3H0zM5 5h3v3H5zM10 5h3v3h-3zM0 10h3v3H0zM5 10h3v3H5zM10 10h3v3h-3z" /></svg>
                    <svg width="15" height="13" viewBox="0 0 15 13" fill="#a8a8a8"><path d="M0 0h15v9H0zM0 10.5h3V13H0zM6 10.5h3V13H6zM12 10.5h3V13h-3z" /></svg>
                    <svg width="11" height="14" viewBox="0 0 11 14" fill="#666"><path d="M0 0h11v14H0z" /></svg>
                </StatusCell>
            </StatusBar>
            <Taskbar>
                <WeatherSlot><WeatherIcon /></WeatherSlot>
                <StartSlot><WinLogo /></StartSlot>
                <SearchBox>
                    <Search size={20} strokeWidth={2} color="#222" />
                    Search
                </SearchBox>
                <AppIcons>
                    <AppIcon><CopilotIcon /></AppIcon>
                    <AppIcon $w={63}><TaskViewIcon /></AppIcon>
                    <AppIcon $w={45}><ChatIcon /></AppIcon>
                    <AppIcon $w={66}><FolderIcon /></AppIcon>
                    <AppIcon $w={45}><EdgeIcon /></AppIcon>
                    <AppIcon $w={63}><StoreIcon /></AppIcon>
                    <AppIcon $w={48}><HpIcon /></AppIcon>
                    <AppIcon $w={62}><HelpIcon /></AppIcon>
                    <AppIcon $w={48}><McAfeeIcon /></AppIcon>
                    <AppIcon $w={62}><ChromeIcon /></AppIcon>
                    <AppIcon $w={48}><YoutubeIcon /></AppIcon>
                </AppIcons>
                <ActiveApp>
                    <TableauLogo s={28} />
                    <ActiveDash />
                </ActiveApp>
                <Tray>
                    <ChevronUp size={22} strokeWidth={2} />
                    <TrayText>ENG<br />IN</TrayText>
                    <TrayIcons>
                        <GlobeOffIcon />
                        <Volume2 size={20} strokeWidth={1.2} />
                        <BatteryIcon />
                    </TrayIcons>
                    <Clock>13:07<br />06-10-2023</Clock>
                    <BellSlot><BellIcon /></BellSlot>
                </Tray>
            </Taskbar>
        </Page>
    );
}
